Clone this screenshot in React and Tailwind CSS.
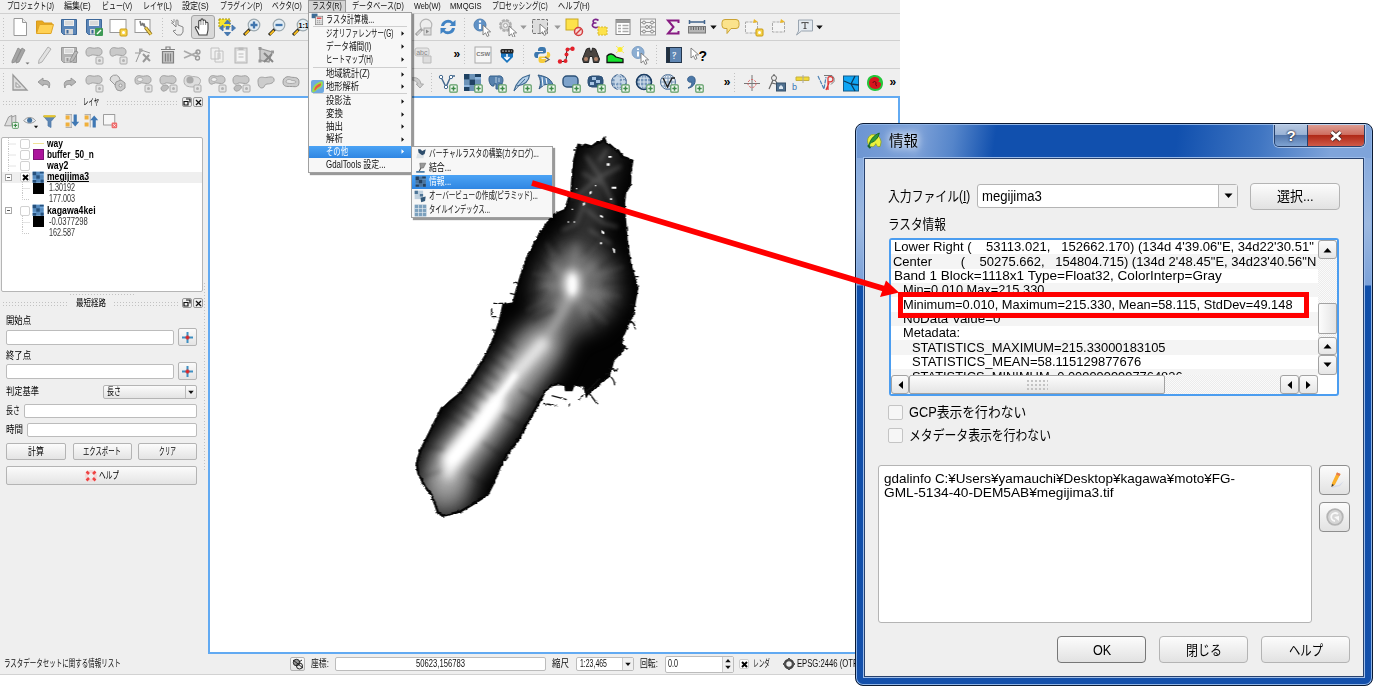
import React, { useLayoutEffect, useRef } from "react";

/* Condenses or widens one line of text to the width of its box. */
function Fit({ className = "", children }) {
  const outer = useRef(null);
  const inner = useRef(null);
  useLayoutEffect(() => {
    const n = inner.current.offsetWidth;
    const w = outer.current.getBoundingClientRect().width;
    if (n > 0) inner.current.style.transform = `scaleX(${w / n})`;
  });
  return (
    <span ref={outer} className={`flex shrink-0 items-center whitespace-pre ${className}`}>
      <span ref={inner} className="inline-block shrink-0 origin-left whitespace-pre">{children}</span>
    </span>
  );
}

const Ic = ({ s = 20, children }) => (
  <svg width={s} height={s} viewBox="0 0 20 20" fill="none" className="shrink-0">{children}</svg>
);
const Cell = ({ children, on }) => (
  <span className="flex h-6 w-[24.6px] shrink-0 items-center justify-center">
    {on ? <span className="flex h-6 w-6 items-center justify-center rounded-[3px] border border-[#a5a5a5] bg-[#d9d9d9]">{children}</span> : children}
  </span>
);
const Dots = ({ className }) => (
  <span className={`shrink-0 bg-[radial-gradient(#c2c2c2_0.7px,transparent_1px)] bg-[size:3px_3px] ${className}`} />
);
const Handle = ({ className }) => (
  <span className={`flex shrink-0 justify-center ${className}`}><Dots className="h-[21px] w-[4px]" /></span>
);
const Tri = ({ c = "#111", className = "w-[9px]" }) => (
  <span className={`flex shrink-0 items-center justify-center ${className}`}>
    <svg width="7" height="5" viewBox="0 0 7 5"><path d="M0.3 0.5h6.4L3.5 4.3z" fill={c} /></svg>
  </span>
);
const Plus = () => (
  <g><rect x="11.8" y="11.8" width="7.4" height="7.4" rx="1" fill="#f4faf4" stroke="#5a9a62" strokeWidth="1.2" /><path d="M15.5 13.300v4.400M13.300 15.500h4.400" stroke="#3c8a48" strokeWidth="1.5" /></g>
);
const Badge = ({ y }) => (
  <g><rect x="12" y="12" width="7" height="7" rx="1" fill={y ? "#f6d34a" : "#e4e4e4"} stroke={y ? "#c99a13" : "#ababab"} /><circle cx="15.5" cy="15.5" r="1.500" fill={y ? "#fff" : "#b2b2b2"} /></g>
);
const Blob = ({ badge = true, hole, low }) => (
  <Ic>
    <path d="M2 7C2 3 5 2 8 3S14 1.500 16.500 3.500S18.500 10.500 14.500 10.500S9 9 6.500 10.500S2 11 2 7Z" fill="#c9c9c9" stroke="#a0a0a0" />
    {hole && <ellipse cx="7" cy="6.500" rx="2.800" ry="2" fill="#efefef" stroke="#a0a0a0" strokeWidth=".7" />}
    {low && <path d="M3 16C3 12 8 11 10 13S7 19 4.500 18Z" fill="#bdbdbd" stroke="#a0a0a0" />}
    {badge && <Badge />}
  </Ic>
);
const Mag = ({ children, g }) => (
  <Ic>
    <path d="M8 12L2 18" stroke={g ? "#999" : "#222"} strokeWidth="3" /><path d="M7 13.500L3 17.500" stroke={g ? "#ccc" : "#f1b71c"} strokeWidth="2" />
    <circle cx="12" cy="8" r="5.800" fill={g ? "#eee" : "#e3edf4"} stroke={g ? "#b5b5b5" : "#9aa7ae"} strokeWidth="1.200" />{children}
  </Ic>
);
const Cursor = ({ x = 9, y = 7 }) => (
  <path transform={`translate(${x} ${y})`} d="M0 0V10L2.500 7.800L4.200 11.500L6 10.500L4.300 7L7.600 6.800Z" fill="#fff" stroke="#777" strokeWidth=".9" />
);
const Floppy = ({ c = "#5b86b8", d = "#3c6799", children }) => (
  <Ic>
    <path d="M2.500 2.500h15v15h-13l-2-2z" fill={c} stroke={d} /><rect x="5" y="3" width="10" height="6" fill="#eee" /><path d="M6 5h8M6 7h8" stroke="#bbb" strokeWidth=".8" /><rect x="6" y="12" width="8" height="5.500" fill="#d8d8d8" /><rect x="7.500" y="13" width="2" height="3.500" fill={d} />{children}
  </Ic>
);
const Checker = ({ s = 20, plus, d = "#1f4263", l = "#6da5db" }) => (
  <Ic s={s}>
    <rect x="1" y="1" width="17" height="17" fill={l} />
    <path d="M6.500 1H12v5.500H6.500zM1 6.500h5.500V12H1zM12 6.500h6V12h-6zM6.500 12H12v6H6.500z" fill={d} opacity=".3" />
    <path d="M1 1h5.500v5.500H1zM12 1h6v3h-6zM6.500 6.500H12V12H6.500zM1 14h5.500v4H1zM13 13h5v5h-5z" fill={d} />
    {plus && <Plus />}
  </Ic>
);
const Globe = ({ children, v }) => (
  <Ic>
    <circle cx="9" cy="9" r="7.500" fill={v ? "#e8eef4" : "#7797bb"} stroke="#4a6b92" /><path d="M1.500 9h15M9 1.500v15M3 5.200h12M3 13h12" stroke={v ? "#7d99b8" : "#dbe6f0"} strokeWidth="1" /><ellipse cx="9" cy="9" rx="3.800" ry="7.500" stroke={v ? "#7d99b8" : "#dbe6f0"} />{children}<Plus />
  </Ic>
);
const Page = ({ c = "#999", children }) => (
  <Ic><path d="M4 1.500h8.500l4 4V18.500H4z" fill="#fff" stroke={c} /><path d="M12.500 1.500v4h4" stroke={c} fill="#eee" />{children}</Ic>
);
const More = ({ className }) => (
  <span className={`flex shrink-0 items-center text-[12px] leading-none font-bold text-black ${className}`}>»</span>
);

function Toolbar1() {
  return (
    <div className="flex h-[27px] items-center border-b border-[#d0d0d0]">
      <Handle className="w-[7.7px]" />
      <Cell><Page /></Cell>
      <Cell><Ic><path d="M1.500 16V4h6l1.500 2h8v3" fill="#e8a91f" stroke="#d79a1c" /><path d="M1.500 16.500L4.500 7.500h14l-2.500 9z" fill="#ffd154" stroke="#e0a526" /></Ic></Cell>
      <Cell><Floppy /></Cell>
      <Cell><Floppy><rect x="11" y="11" width="8" height="8" rx="1" fill="#3f9a55" /><path d="M13 17l4-4" stroke="#fff" strokeWidth="1.500" /></Floppy></Cell>
      <Cell><Ic><rect x="2" y="2.500" width="16" height="13" fill="#fff" stroke="#999" /><Badge y /></Ic></Cell>
      <Cell><Ic><rect x="2" y="2.500" width="15" height="13" fill="#fff" stroke="#999" /><path d="M9 6l4 5" stroke="#777" strokeWidth="2" /><path d="M12.500 10.500l5.500 7" stroke="#8a6a10" strokeWidth="3.500" /><path d="M12.500 10.500l5.500 7" stroke="#f0d25a" strokeWidth="2" /><path d="M7 4l1 4 4-1" stroke="#777" strokeWidth="1.500" /></Ic></Cell>
      <Handle className="w-[10.7px] pl-[4px]" />
      <Cell><Ic><path d="M4 6l4 4V4c0-1.500 2-1.500 2 0v4l5 2v5l-2 3H9l-4-4 3-1" fill="#eee" stroke="#888" /><path d="M3 3l3 3M6 2v3M3 6h2" stroke="#999" /></Ic></Cell>
      <Cell on><Ic><path d="M6 18C5 15 2.500 12 2.200 10.200C3 9 4.500 9.500 5.700 11.500V4.500C5.700 3 7.700 3 7.900 4.500V3C8 1.500 10 1.500 10.200 3V4C10.500 2.700 12.400 2.700 12.600 4.300V6C13 4.800 15 5 15 6.500V12C15 15 14 16 14 18Z" fill="#fff" stroke="#444" strokeWidth="1.100" /><path d="M7.900 4.500V8M10.200 4v4M12.600 5.500V8" stroke="#777" strokeWidth=".8" /></Ic></Cell>
      <Cell><Ic><path d="M2 2h11v8H2z" fill="#f7e52e" stroke="#a38f10" strokeDasharray="2 1" /><path d="M10.500 3l3 3.500h-6zM10.500 19l3-3.500h-6zM2.500 11l3.500-3v6zM18.500 11L15 8v6z" fill="#4879b0" stroke="#4879b0" /><rect x="8.700" y="9" width="3.600" height="3.600" fill="#4879b0" /></Ic></Cell>
      <Cell><Mag><path d="M12 4.500v7M8.500 8h7" stroke="#4076ae" strokeWidth="2.300" /></Mag></Cell>
      <Cell><Mag><path d="M8.500 8h7" stroke="#4076ae" strokeWidth="2.300" /></Mag></Cell>
      <Cell><Mag><text x="7.600" y="10.800" className="fill-black text-[7px] font-bold">1:1</text></Mag></Cell>
      <span className="w-[98px] shrink-0" />
      <Cell><Mag g><rect x="10" y="11" width="7" height="7" fill="#ddd" stroke="#aaa" /><path d="M12 12.500l3 2-3 2z" fill="#888" /></Mag></Cell>
      <Cell><Ic><path d="M3 9a7 7 0 0 1 12-4l2.500-2v6h-6l2-2a4.500 4.500 0 0 0-7.500 2z" fill="#4183c4" /><path d="M17 11a7 7 0 0 1-12 4l-2.500 2v-6h6l-2 2a4.500 4.500 0 0 0 7.500-2z" fill="#4183c4" /></Ic></Cell>
      <Handle className="w-[9.4px]" />
      <Cell><Ic><circle cx="8" cy="8" r="6" fill="#5f91c6" stroke="#4f7fb0" /><path d="M8 7v5M8 3.500v2" stroke="#fff" strokeWidth="2.200" /><Cursor x={11} y={8} /></Ic></Cell>
      <Cell><Ic><circle cx="8.500" cy="8.500" r="5.500" fill="#ddd" stroke="#b0b0b0" strokeWidth="2" strokeDasharray="3 1.300" /><circle cx="8.500" cy="8.500" r="4.500" fill="#ddd" stroke="#aaa" /><circle cx="8.500" cy="8.500" r="2" fill="#f2f2f2" stroke="#aaa" /><Cursor x={12} y={9} /></Ic></Cell>
      <Tri c="#999" />
      <Cell><Ic><rect x="1.500" y="2.500" width="15" height="14" fill="#ddd" stroke="#777" strokeDasharray="3 1.500" /><Cursor x={9} y={7} /></Ic></Cell>
      <Tri c="#999" />
      <Cell><Ic><rect x="2" y="2" width="12" height="11" fill="#fde24a" stroke="#c9a722" /><circle cx="14.500" cy="14.500" r="4" fill="#f6dada" stroke="#d33e3e" strokeWidth="1.500" /><path d="M12 17l5-5" stroke="#d33e3e" strokeWidth="1.400" /></Ic></Cell>
      <Cell><Ic><path d="M9.500 3.500C6 1 2.500 3.500 5 6H7.500H5C1.500 8 4 12 9.500 10" stroke="#7b2389" strokeWidth="1.700" /><rect x="9" y="10" width="9" height="8" fill="#fde24a" stroke="#d7b92d" strokeDasharray="2 1" /></Ic></Cell>
      <Cell><Ic><rect x="3" y="2.500" width="14" height="15" fill="#fff" stroke="#888" /><path d="M3 4.500h14" stroke="#999" strokeWidth="3" /><path d="M5 8.500h3M5 11.500h3M5 14.500h3M9.500 8.500h6M9.500 11.500h6M9.500 14.500h6" stroke="#aaa" strokeWidth="1.500" /></Ic></Cell>
      <Cell><Ic><rect x="2.500" y="2" width="15" height="16" fill="#f3f3f3" stroke="#999" /><path d="M3 5.500h14M3 10h14M3 14.500h14" stroke="#999" /><g fill="#eee" stroke="#888"><circle cx="6" cy="5.500" r="1.500" /><circle cx="14" cy="5.500" r="1.500" /><circle cx="9" cy="10" r="1.500" /><circle cx="12.500" cy="10" r="1.500" /><circle cx="6" cy="14.500" r="1.500" /><circle cx="14" cy="14.500" r="1.500" /></g></Ic></Cell>
      <Cell><Ic><path d="M15.500 6V3.500H5L10.500 10L5 16.500H15.500V14" stroke="#871b82" strokeWidth="2" /></Ic></Cell>
      <Cell><Ic><path d="M2 5h16M2.500 3v4M17.500 3v4" stroke="#41648c" strokeWidth="1.500" /><rect x="1.500" y="9.500" width="17" height="6.500" fill="#b5b5b5" stroke="#777" /><path d="M4 10v3M6.500 10v3M9 10v3M11.500 10v3M14 10v3M16.500 10v3" stroke="#666" /></Ic></Cell>
      <Tri className="w-[8px]" />
      <Cell><Ic><path d="M5 2.500h11q3 0 3 3v3q0 3-3 3h-5l-4 5v-5H5q-3 0-3-3v-3q0-3 3-3z" fill="#fbe38c" stroke="#caa334" /></Ic></Cell>
      <Cell><Ic><path d="M1.500 5h12v11h-12z" stroke="#aaa" strokeDasharray="3 1" fill="#f4f4f4" /><path d="M9 6l1-4 4 3z" fill="#eab729" /><Badge y /></Ic></Cell>
      <Cell><Ic><path d="M3.500 5h12v10h-12z" stroke="#aaa" strokeDasharray="3 1" fill="#f4f4f4" /><path d="M11 6l1-4 4 3z" fill="#eab729" /></Ic></Cell>
      <Cell><Ic><path d="M4.500 3h14v11h-11l-5 4 2-4z" fill="#e3e9ef" stroke="#9aa5b0" /><path d="M8 6.500V5.500h6v1M11 5.500v6M9.500 11.500h3" stroke="#555" strokeWidth="1.200" /></Ic></Cell>
      <Tri className="w-[8px]" />
    </div>
  );
}

function Toolbar2() {
  return (
    <div className="flex h-[28px] items-center border-b border-[#d0d0d0]">
      <Handle className="w-[7.7px]" />
      <Cell><Ic><path d="M2 16L8 3l3 2-6 12-3 1zM6 16L12 3l3 2-6 12-3 1z" fill="#a5a5a5" stroke="#888" strokeWidth=".8" /><path d="M15.500 17.500h4l-2 2z" fill="#777" /></Ic></Cell>
      <Cell><Ic><path d="M4 15L13 2l3 2L7 17l-3.500 1.500z" fill="#e2e2e2" stroke="#b0b0b0" /></Ic></Cell>
      <Cell><Floppy c="#b4b4b4" d="#989898"><path d="M11 15l5-9 3 1-5 9-3 1z" fill="#bbb" stroke="#888" strokeWidth=".8" /></Floppy></Cell>
      <Cell><Blob /></Cell>
      <Cell><Blob /></Cell>
      <Cell><Ic><path d="M3 17L8 5L17 8M2 8h6" stroke="#999" /><rect x="6" y="3.500" width="3.500" height="3.500" fill="#aaa" /><path d="M10 9l7 7M16 10l-6 7" stroke="#999" strokeWidth="2" /></Ic></Cell>
      <Cell><Ic><path d="M4.500 6.500h11V18h-11z" fill="#c4c4c4" stroke="#808080" strokeWidth="1.200" /><path d="M3 4.500h14M8 4V2h4v2M7.500 8.500v8M10 8.500v8M12.500 8.500v8" stroke="#808080" strokeWidth="1.200" /></Ic></Cell>
      <Cell><Ic><path d="M2 6L15 12M2 13L16 7" stroke="#aaa" strokeWidth="1.800" /><circle cx="15.500" cy="13" r="2" stroke="#999" strokeWidth="1.300" /><circle cx="16" cy="7" r="2" stroke="#999" strokeWidth="1.300" /></Ic></Cell>
      <Cell><Ic><path d="M4 3h8v11H4zM8 6h8v11H8z" fill="#f1f1f1" stroke="#c0c0c0" /><path d="M10 9h4M10 11h4M10 13h4" stroke="#c5c5c5" /></Ic></Cell>
      <Cell><Ic><rect x="4" y="3" width="12" height="15" fill="#ddd" stroke="#b5b5b5" /><rect x="6" y="6" width="8" height="10" fill="#f5f5f5" /><path d="M7.500 2.500h5v2.500h-5z" fill="#bbb" /><path d="M7.500 9h5M7.500 12h5" stroke="#bbb" /></Ic></Cell>
      <Cell><Ic><path d="M4 3.500L16 7L13 17L4 15.500Z" fill="#ccc" stroke="#999" strokeWidth="1.300" /><path d="M2.500 2h3v3h-3zM15 5.500h3v3h-3zM2.500 14.500h3v3h-3z" fill="#999" /><path d="M8 8l9 9M16 9l-8 8" stroke="#888" strokeWidth="2" /></Ic></Cell>
      <span className="w-[133.400px] shrink-0" />
      <Cell><Ic><rect x="1" y="3" width="14" height="8" rx="2" fill="#e4e4e4" stroke="#c0c0c0" /><text x="2.200" y="9.500" className="fill-[#888] text-[7px]">abc</text><path d="M9 11h8v7H9z" fill="#ddd" stroke="#bbb" /></Ic></Cell>
      <More className="w-[24px] justify-end pb-px" />
      <Handle className="w-[10px]" />
      <Cell><Ic><rect x="2" y="2" width="16" height="16" fill="#f6f6f6" stroke="#aaa" /><text x="3.200" y="11" className="fill-[#777] text-[6px] font-bold">CSW</text></Ic></Cell>
      <Cell><Ic><path d="M4 7h12v5l-6 6-6-6z" fill="#1874be" /><rect x="3.500" y="4" width="13" height="4.500" rx="1.500" fill="#222" /><path d="M5 6.200h10" stroke="#999" strokeWidth="1.200" strokeDasharray="2 1" /><path d="M10 9v5M7.500 12L10 14.500L12.500 12" stroke="#fff" strokeWidth="1.500" /></Ic></Cell>
      <Handle className="w-[10px]" />
      <Cell><Ic><path d="M10 2C6 2 6 4 6 6h5v1H4C1.500 7 1.500 13 4.500 13H6v-2c0-2 1-2.500 4-2.500s4 0 4-2.500C14 2.500 13 2 10 2z" fill="#3b77ae" /><path d="M10 18c4 0 4-2 4-4H9.500v-1H16c3 0 3-6 0-6h-1v2c0 2-1 2.500-4 2.500S6.500 11 6.500 14 7 18 10 18z" fill="#f6cc3b" /><path d="M13 12l4 2.500-4 2.500" stroke="#666" strokeWidth="1.300" /></Ic></Cell>
      <Cell><Ic><path d="M4 16.500H9.500L10.500 12V7L12 4H16" stroke="#222" /><g fill="#e5202a"><circle cx="4" cy="16.500" r="2.200" /><circle cx="9.500" cy="16" r="2" /><circle cx="10.500" cy="9.500" r="2" /><circle cx="11.500" cy="4.500" r="2" /><circle cx="16.500" cy="3.800" r="2.200" /></g></Ic></Cell>
      <Cell><Ic><path d="M5.500 4l3-1 1 4h1l1-4 3 1 4 10-1 3.500h-5l-1-6h-3l-1 6h-5L1.500 14z" fill="#4a4440" stroke="#222" /><circle cx="5" cy="14" r="2" fill="#b2846a" /><circle cx="15" cy="14" r="2" fill="#b2846a" /></Ic></Cell>
      <Cell><Ic><path d="M2 17.500V11Q6 6.500 11 12L18 14V17.500Z" fill="#15e22d" stroke="#111" strokeWidth="1.300" /><circle cx="15" cy="4.500" r="2.500" fill="#fff21e" /><path d="M11 1l8 7M19 1l-8 7" stroke="#f5e63c" strokeWidth=".8" /></Ic></Cell>
      <Cell><Ic><circle cx="8" cy="7.500" r="6" fill="#8caed2" stroke="#7d9fc5" /><path d="M8 6.500v5M8 3.500v1.500" stroke="#fff" strokeWidth="2" /><Cursor x={11} y={8} /></Ic></Cell>
      <Handle className="w-[9.500px]" />
      <Cell><Ic><rect x="2.500" y="2.500" width="15" height="15" fill="#5f86b3" stroke="#24364c" /><path d="M4.500 2.500v15" stroke="#22303f" strokeWidth="3" /><text x="8.300" y="13.800" className="fill-white font-serif text-[11px]">?</text></Ic></Cell>
      <Cell><Ic><Cursor x={2} y={3} /><text x="9.500" y="15.500" className="fill-black text-[14px] font-bold">?</text></Ic></Cell>
    </div>
  );
}

function Toolbar3() {
  return (
    <div className="flex h-[27px] items-center">
      <Handle className="w-[7.700px]" />
      <Cell><Ic><path d="M3 2L17 17H3Z" fill="#ddd" stroke="#999" strokeWidth="1.300" /><path d="M6 9.500l4.500 4.500H6z" fill="#efefef" stroke="#999" /></Ic></Cell>
      <Cell><Ic><path d="M3 9l5-4v2.500c6-.5 8 2 6 7.500 0-3-2-4-6-3.500V13z" fill="#b5b5b5" stroke="#999" /></Ic></Cell>
      <Cell><Ic><path d="M17 9l-5-4v2.500c-6-.5-8 2-6 7.500 0-3 2-4 6-3.500V13z" fill="#b5b5b5" stroke="#999" /></Ic></Cell>
      <Cell><Blob /></Cell>
      <Cell><Ic><path d="M2 7a5 5 0 0 1 9-3l2 5-5 4z" fill="#ddd" stroke="#999" /><path d="M8 9l5-2 4 3v5l-4 3-4-1-2-4z" fill="#c9c9c9" stroke="#999" /><circle cx="12.500" cy="12.500" r="1.500" fill="#eee" stroke="#999" /></Ic></Cell>
      <Cell><Blob hole /></Cell><Cell><Blob low /></Cell>
      <Cell><Ic><path d="M2 8c0-5 3-6 6-5s8 0 10 3-2 8-7 8S2 13 2 8z" fill="#ddd" stroke="#b0b0b0" /><circle cx="8" cy="7" r="3.600" fill="#aaa" /><Badge /></Ic></Cell>
      <Cell><Blob hole /></Cell><Cell><Blob low /></Cell>
      <Cell><Ic><path d="M2 8C2 3.500 6 4 8.500 4.500S17 2 18 6s-4 5-7 5-2 4-5 4S2 12 2 8Z" fill="#ccc" stroke="#a0a0a0" /></Ic></Cell>
      <Cell><Ic><path d="M2 9C2 4 7 3 9.500 4S18 3 18 9s-4 4.500-8 4.500S2 14 2 9Z" fill="#ccc" stroke="#999" /><path d="M5 9c0-3 4-3 5-2s5 0 5 2-10 2-10 0z" fill="#e6e6e6" stroke="#aaa" /></Ic></Cell>
      <span className="w-[101px] shrink-0" />
      <Cell><Ic><path d="M3 6c6-3 11-1 12 5h2.500L14 15l-4-4h2c-1-3-5-4-9-5z" fill="#ccc" stroke="#aaa" /></Ic></Cell>
      <Handle className="w-[7.400px]" />
      <Cell><Ic><path d="M3 4L8 14L13 3L17 3" stroke="#44698f" strokeWidth="1.500" /><g fill="#fff" stroke="#44698f"><circle cx="3" cy="4" r="1.700" /><circle cx="8" cy="14" r="1.700" /><circle cx="13" cy="4" r="1.700" /></g><Plus /></Ic></Cell>
      <Cell><Checker plus l="#8fb6dd" /></Cell>
      <Cell><Ic><path d="M3 3h8c5-1 6 4 4 8h-3v5H9v-5H7v2H5C2 11 1 5 3 3z" fill="#5781ad" stroke="#35608c" /><path d="M9 4v6M12 5v4" stroke="#b9cfe4" /><Plus /></Ic></Cell>
      <Cell><Ic><path d="M2 18C4 10 9 4 17.500 2C17 8 12 12 5 13" fill="#b4d0ea" stroke="#3e6890" strokeWidth="1.200" /><path d="M2 18L13 6" stroke="#3e6890" /><Plus /></Ic></Cell>
      <Cell><Ic><path d="M2 2C8 3 15 5 17 12L12 11L8 12L3 16C5 11 5 7 2 2Z" fill="#5d8bbb" stroke="#31587f" /><path d="M6 4l1 9M10 5l1 6" stroke="#fff" /><Plus /></Ic></Cell>
      <Cell><Ic><rect x="2" y="3" width="15" height="11" rx="4" fill="#7ea3cb" stroke="#2d5177" strokeWidth="1.400" /><Plus /></Ic></Cell>
      <Cell><Ic><rect x="2" y="3" width="15" height="11" rx="4" fill="#32577f" stroke="#2d5177" /><path d="M6 4h4v3H6zM10 7h4v3h-4zM4 9h4v3H4z" fill="#a9c6e4" /><Plus /></Ic></Cell>
      <Cell><Globe><path d="M4 5l4-2 2 4-4 4zM11 8l4-1v4l-3 2z" fill="#c6d7e8" /></Globe></Cell>
      <Cell><Globe><circle cx="9" cy="9" r="7.500" stroke="#1d3e63" strokeWidth="1.600" /></Globe></Cell>
      <Cell><Globe v><path d="M4 5l4.500 9L13 5h3" stroke="#222" strokeWidth="1.400" /></Globe></Cell>
      <Cell><Ic><path d="M4 15c4-2 4-4 3.500-6C4 10 3 7 4 5s6-3 7 1c1 5-3 9-7 9z" fill="#4c78a8" stroke="#335d8a" /><Plus /></Ic></Cell>
      <More className="w-[24px] justify-end pb-px" />
      <Handle className="w-[9.500px]" />
      <Cell><Ic><path d="M10 2v16M2 10.500h16" stroke="#777" /><circle cx="10" cy="10.500" r="4" stroke="#d55" strokeDasharray="2 1.500" /></Ic></Cell>
      <Cell><Ic><circle cx="7" cy="5" r="2.500" stroke="#666" /><path d="M6 7L2 16M8 7l2 3M5 10l4 1M7 1v2" stroke="#666" strokeWidth="1.200" /><rect x="9.500" y="10" width="9" height="8" fill="#51718f" stroke="#35506a" /><path d="M12 14l2-2 2 2v2h-4z" fill="#dde8f1" /></Ic></Cell>
      <Cell><Ic><path d="M5 4h13v3.500H5z" fill="#f1d936" stroke="#c5b040" /><path d="M12 2v8" stroke="#aaa" /><text x="1" y="17" className="fill-[#3a75b5] text-[9px]">b</text></Ic></Cell>
      <Cell><Ic><path d="M2 3l6 13L10 4" stroke="#4c82b5" strokeWidth="1.200" strokeDasharray="4 1" /><path d="M12 17V5c0-2 5-2 5 1s-2 3-5 3M13 10l-3 7" stroke="#d33" strokeWidth="1.300" /><path d="M8 2.500h8q3 2 2 6l-3 3" stroke="#777" /></Ic></Cell>
      <Cell><Ic><rect x="2.500" y="3" width="15" height="15" fill="#10a6f5" stroke="#135b89" /><path d="M3 8l7 3 4-8M10 11l4 7M10 11l8 1" stroke="#0f3c5c" strokeWidth="1.300" /></Ic></Cell>
      <Cell><Ic><path d="M2 10C2 4 6 2 10 2s8 3 8 8-3 8-8 8-8-4-8-8z" fill="#24c63b" /><path d="M4 10c0-4 3-6 6-6s6 3 3 5c3 0 4 2 2 5s-11 3-11-4z" fill="#d9141e" /><path d="M8 10c0-2 3-2 3 0s-1 2 1 3" stroke="#5a0d0f" strokeWidth="1" /></Ic></Cell>
      <More className="w-[9px] pb-px pl-[2px]" />
    </div>
  );
}

const MENUS = [
  ["プロジェクト(J)", "ml-[7px] w-[47px]"], ["編集(E)", "ml-[10px] w-[27px]"], ["ビュー(V)", "ml-[11px] w-[30px]"],
  ["レイヤ(L)", "ml-[11px] w-[29px]"], ["設定(S)", "ml-[10px] w-[27px]"], ["プラグイン(P)", "ml-[11px] w-[42px]"],
  ["ベクタ(O)", "ml-[10px] w-[30px]"], ["ラスタ(R)", "w-[30px]"], ["データベース(D)", "ml-[6px] w-[52px]"],
  ["Web(W)", "ml-[10px] w-[27px]"], ["MMQGIS", "ml-[9px] w-[32px]"], ["プロセッシング(C)", "ml-[10px] w-[56px]"], ["ヘルプ(H)", "ml-[10px] w-[32px]"],
];

function Tree({ rows }) {
  return (
    <div className="mt-[7px] ml-px flex h-[155px] w-[202px] flex-col rounded-[2px] border border-[#b5b5b5] bg-white">
      {rows.map((r, i) => (
        <div key={i} className={`flex h-[11.180px] shrink-0 items-center ${r.sel ? "bg-[#efefef]" : ""}`}>
          <span className="flex w-[14px] shrink-0 justify-center">
            {r.exp ? <svg width="7" height="7" className="-ml-[1px]"><rect x=".5" y=".5" width="6" height="6" fill="#fff" stroke="#aaa" /><path d="M2 3.500h3" stroke="#555" /></svg>
              : r.leaf ? null : <svg width="9" height="12" className="ml-[4px]"><path d="M1.500 0v12M1.500 6h7" stroke="#c8c8c8" strokeDasharray="1 1" /></svg>}
          </span>
          {r.leaf ? (
            <span className="flex w-[14px] justify-end"><svg width="8" height="12"><path d={r.last ? "M.5 0v6.500h7" : "M.5 0v12M.5 6.500h7"} stroke="#c8c8c8" fill="none" strokeDasharray="1 1" /></svg></span>
          ) : (
            <span className="flex w-[14px] shrink-0 justify-end">
              <span className="flex h-[10px] w-[10px] items-center justify-center rounded-[2px] border border-[#d2d2d2] bg-white">
                {r.on && <svg width="7" height="7"><path d="M1 1l5 5M6 1L1 6" stroke="#000" strokeWidth="2" /></svg>}
              </span>
            </span>
          )}
          <span className="ml-[2px] flex w-[12px] shrink-0 items-center justify-center">{r.icon}</span>
          <Fit className={`text-[10px] leading-none ${r.leaf ? "ml-[5px] text-[#333]" : "ml-[3px] font-bold text-black"} ${r.sel ? "underline" : ""} ${r.w}`}>{r.t}</Fit>
        </div>
      ))}
    </div>
  );
}
const Black = () => <span className="h-[11px] w-[11px] bg-black" />;
const LAYERS = [
  { t: "way", w: "w-[16px]", icon: <span className="h-px w-[11px] bg-[#f0e296]" /> },
  { t: "buffer_50_n", w: "w-[47px]", icon: <span className="h-[11px] w-[11px] border border-[#7c1273] bg-[#ac149c]" /> },
  { t: "way2", w: "w-[21px]" },
  { t: "megijima3", w: "w-[42px]", sel: true, exp: true, on: true, icon: <Checker s={13} d="#26507c" /> },
  { t: "1.30192", w: "w-[26px]", leaf: true, icon: <Black /> },
  { t: "177.003", w: "w-[26px]", leaf: true, last: true },
  { t: "kagawa4kei", w: "w-[49px]", exp: true, icon: <Checker s={13} d="#26507c" /> },
  { t: "-0.0377298", w: "w-[39px]", leaf: true, icon: <Black /> },
  { t: "162.587", w: "w-[26px]", leaf: true, last: true },
];

const DockTitle = ({ t, w }) => (
  <div className="flex h-[12px] items-center pl-[2px]">
    <Dots className="h-[5px] flex-1" />
    <Fit className={`mx-[7px] text-[9.500px] leading-none ${w}`}>{t}</Fit>
    <Dots className="mr-[3px] h-[5px] flex-1" />
    <span className="mr-px flex h-[10px] w-[10px] shrink-0 items-center justify-center rounded-[2px] border border-[#999] bg-[#eee]"><svg width="8" height="8"><path d="M3 1h4v3.500M1 3.500h4v3.500H1z" stroke="#111" fill="none" strokeWidth="1.200" /></svg></span>
    <span className="flex h-[10px] w-[10px] shrink-0 items-center justify-center rounded-[2px] border border-[#999] bg-[#eee]"><svg width="7" height="7"><path d="M1 1l5 5M6 1L1 6" stroke="#111" strokeWidth="1.300" /></svg></span>
  </div>
);
const Field = ({ className }) => <span className={`rounded-[2px] border border-[#bcbcbc] bg-white ${className}`} />;
const btn = "flex items-center justify-center rounded-[2px] border border-[#b4b4b4] bg-linear-to-b from-[#fbfbfb] to-[#e4e4e4]";
const CrossBtn = () => (
  <span className={`h-[18px] w-[19px] ${btn}`}><svg width="11" height="11"><path d="M5.500 0v11M0 5.500h11" stroke="#3e8fc2" strokeWidth="2" /><path d="M5.500 3.500v4M3.500 5.500h4" stroke="#e02828" strokeWidth="2" /></svg></span>
);

function LeftPanel() {
  return (
    <div className="flex w-[208px] shrink-0 text-black">
      <div className="flex w-[203px] shrink-0 flex-col">
        <DockTitle t="レイヤ" w="w-[16px]" />
        <div className="mt-[4px] flex h-[18px] items-center gap-[3px] pl-[3px]">
          <Ic s={16}><path d="M2 16l5-11 4-2v12M11 5l5-2v13H2" fill="#ddd" stroke="#888" /><Plus /></Ic>
          <Ic s={17}><path d="M2 9c4-5 10-5 14 0-4 4-10 4-14 0z" fill="#e9eff5" stroke="#888" /><circle cx="9" cy="8.500" r="3" fill="#44729e" /><path d="M14 15h5l-2.500 3z" fill="#111" /></Ic>
          <Ic s={15}><path d="M2 3h16l-6 7v8l-4-2v-6z" fill="#5d86b4" stroke="#4f79a8" /><path d="M2 3h16" stroke="#e5c530" strokeWidth="3" /></Ic>
          <span className="w-px" />
          <Ic s={16}><path d="M2 3h5v5H2zM2 12h5v5H2z" fill="#f0b03c" /><path d="M9 2v16M2 2h8M2 18h8" stroke="#999" /><path d="M12 2h4v9h3l-5 6-5-6h3z" fill="#3f78b4" /></Ic>
          <Ic s={16}><path d="M2 3h5v5H2zM2 12h5v5H2z" fill="#f0b03c" /><path d="M9 2v16M2 2h8" stroke="#999" /><path d="M12 18h4V9h3l-5-6-5 6h3z" fill="#3f78b4" /></Ic>
          <Ic s={16}><rect x="2" y="2" width="14" height="13" fill="#f7f7f7" stroke="#888" /><rect x="12" y="12" width="7" height="7" rx="1.500" fill="#ee6a6a" /><path d="M14 14l3 3M17 14l-3 3" stroke="#fff" /></Ic>
        </div>
        <Tree rows={LAYERS} />
        <div className="flex h-[5px] items-center justify-center"><Dots className="h-[4px] w-[66px]" /></div>
        <DockTitle t="最短経路" w="w-[30px]" />
        <div className="flex w-[197px] flex-col pl-[6px] text-[10px] leading-none">
          <Fit className="mt-[6px] h-[11px] w-[25px]">開始点</Fit>
          <div className="mt-[2px] flex items-center justify-between"><Field className="h-[15px] w-[168px]" /><CrossBtn /></div>
          <Fit className="mt-[4px] h-[11px] w-[25px]">終了点</Fit>
          <div className="mt-px flex items-center justify-between"><Field className="h-[15px] w-[168px]" /><CrossBtn /></div>
          <div className="mt-[5px] flex items-center justify-between">
            <Fit className="w-[33px]">判定基準</Fit>
            <span className={`h-[14px] w-[94px] !justify-between pl-[3px] ${btn}`}><Fit className="w-[14px]">長さ</Fit><span className="flex h-full w-[11px] items-center justify-center border-l border-[#bbb]"><Tri className="w-[6px]" /></span></span>
          </div>
          <div className="mt-[5px] flex items-center justify-between"><Fit className="w-[14px]">長さ</Fit><Field className="h-[14px] w-[173px]" /></div>
          <div className="mt-[5px] flex items-center justify-between"><Fit className="w-[17px]">時間</Fit><Field className="h-[14px] w-[170px]" /></div>
          <div className="mt-[6px] flex justify-between">
            <span className={`h-[17px] w-[60px] ${btn}`}><Fit className="w-[16px]">計算</Fit></span>
            <span className={`h-[17px] w-[59px] ${btn}`}><Fit className="w-[38px]">エクスポート</Fit></span>
            <span className={`h-[17px] w-[59px] ${btn}`}><Fit className="w-[17px]">クリア</Fit></span>
          </div>
          <span className={`mt-[6px] h-[19px] gap-[2px] ${btn}`}>
            <svg width="12" height="12" viewBox="0 0 12 12"><circle cx="6" cy="6" r="4.500" fill="none" stroke="#f4d6d6" strokeWidth="3" /><path d="M1.500 1.500l2.500 2.500M10.500 1.500L8 4M1.500 10.500l2.500-2.500M10.500 10.500L8 8" stroke="#e44" strokeWidth="2.500" /></svg>
            <Fit className="w-[20px]">ヘルプ</Fit>
          </span>
        </div>
      </div>
      <Dots className="mt-[186px] h-[190px] w-[3px]" />
    </div>
  );
}

const OUT = "M535 45L548 48L556 44L575 50L588 40L600 38L612 25L618 38L630 45L642 56L655 62L665 80L680 84L697 92L692 120L690 165L675 190L672 220L675 270L680 330L690 400L702 440L712 475L705 510L697 560L685 580L668 620L664 640L674 650L660 670L640 690L632 720L625 740L600 760L575 780L560 795L552 766L520 766L515 780L498 780L496 765L480 762L455 765L435 785L410 830L375 890L355 930L320 975L300 1010L280 1060L262 1095L215 1125L180 1145L130 1157L115 1150L95 1095L75 1070L55 1030L50 1000L62 960L75 935L100 885L125 835L175 795L215 745L255 680L280 630L300 570L310 525L340 520L350 480L365 430L385 375L420 310L460 255L495 240L515 180L520 100Z";

function Island() {
  return (
    <svg width="260" height="400" viewBox="0 0 780 1200" className="block">
      <defs>
        <clipPath id="coast"><path d={OUT} /></clipPath>
        <filter id="rough" x="0" y="0" width="780" height="1200" filterUnits="userSpaceOnUse" colorInterpolationFilters="sRGB"><feTurbulence type="fractalNoise" baseFrequency="0.09" numOctaves="2" seed="4" result="n" /><feDisplacementMap in="SourceGraphic" in2="n" scale="9" xChannelSelector="R" yChannelSelector="G" /></filter>
        <filter id="b8" x="0" y="0" width="780" height="1200" filterUnits="userSpaceOnUse" colorInterpolationFilters="sRGB"><feGaussianBlur stdDeviation="7" /></filter>
        <filter id="b12" x="0" y="0" width="780" height="1200" filterUnits="userSpaceOnUse" colorInterpolationFilters="sRGB"><feGaussianBlur stdDeviation="13" /></filter>
        <filter id="b20" x="0" y="0" width="780" height="1200" filterUnits="userSpaceOnUse" colorInterpolationFilters="sRGB"><feGaussianBlur stdDeviation="22" /></filter>
        <filter id="b35" x="-60" y="-60" width="900" height="1320" filterUnits="userSpaceOnUse" colorInterpolationFilters="sRGB"><feGaussianBlur stdDeviation="30" /></filter>
      </defs>
      <g clipPath="url(#coast)" fill="none" strokeLinecap="round" strokeLinejoin="round">
        <rect width="780" height="1200" fill="#030303" />
        <g filter="url(#b35)">
          <path d="M430 390L490 320L590 330L650 410L655 520L590 590L500 620L420 590L400 480Z" fill="#5a5a5a" />
          <path d="M400 680L500 560" stroke="#5a5a5a" strokeWidth="110" />
          <path d="M135 1080L150 1010L235 900L325 775L415 650" stroke="#808080" strokeWidth="155" />
          <path d="M610 80L580 190L555 320" stroke="#343434" strokeWidth="90" />
        </g>
        <g filter="url(#b20)">
          <path d="M470 400L520 370L580 410L600 470L560 530L500 540L450 490Z" fill="#747474" />
          <path d="M425 640L470 575L515 500" stroke="#757575" strokeWidth="42" />
          <path d="M140 1050L155 995L240 890L305 795L350 730L425 645" stroke="#b0b0b0" strokeWidth="78" />
        </g>
        <g filter="url(#b12)">
          <path d="M517 465l-55-55M517 465l60-60M517 475l100 35M517 480l45 70M517 465L528 345M517 465l-85 5M517 470l-50 60" stroke="#a0a0a0" strokeWidth="17" opacity=".55" />
          <path d="M520 490L480 560L430 635L390 670" stroke="#adadad" strokeWidth="22" />
          <path d="M146 1030L165 975L240 885L300 795L350 728L428 640" stroke="#e8e8e8" strokeWidth="34" />
          <path d="M155 990L240 885L285 820" stroke="#fff" strokeWidth="58" />
          <ellipse cx="516" cy="462" rx="26" ry="44" fill="#eee" />
        </g>
        <g filter="url(#b8)">
          <path d="M560 80l40 60 60-30M600 140l-60 50-30 10M600 140l40 80M560 200l-30 80-40 20M560 240l50 40 40 10M550 130l50 30M570 300l60 40M600 90l20-30" stroke="#8a8a8a" strokeWidth="9" opacity=".42" />
          <path d="M560 370l50-60M600 410l60-40M610 460l80-5M610 510l60 40M570 550l25 50M450 420l-40-40M440 480l-60 20M460 540l-60 30M480 370l-30-50" stroke="#000" strokeWidth="9" opacity=".25" />
          <path d="M540 400l60-70M580 440l90-30M580 480l80 20M560 520l60 60M450 440l-50-10M440 510l-60 30M460 380l-20-40" stroke="#bbb" strokeWidth="6" opacity=".2" />
          <path d="M130 850l60 35M180 800l55 42M225 740l55 42M265 680l50 38M305 620l40 32M80 950l50 8M70 1040l50-16M420 820l-60-38M370 890l-60-34M310 980l-60-42M270 1070l-60-34M155 825l60 40M205 770l55 40M245 712l50 36M285 650l50 36" stroke="#000" strokeWidth="7" opacity=".27" />
          <path d="M160 985L240 886L300 797L345 735" stroke="#fff" strokeWidth="16" />
          <ellipse cx="517" cy="464" rx="10" ry="28" fill="#fff" />
        </g>
      </g>
      <g filter="url(#rough)">
        <path d={OUT} fill="none" stroke="#060606" strokeWidth="7" />
        <path d="M700 440h16M340 458l14 4M330 490l16 4M272 598l18 4M690 520l18 10M685 570q18 5 22 28M665 650l20 8 M630 715q15 12 23 2M620 730q25 18 24 36M600 745l-65 65M560 780l32 42M455 797l45 12M430 820l40 8M508 820v10M275 560h25M280 520h30M275 535v20M325 980l-8 10M310 1000h-14M520 60h8" stroke="#111" strokeWidth="4" fill="none" />
      </g>
      <path d="M625 78h10v5h-10zM620 100h9v7h-9zM635 170h14v6h-14zM568 186l7-4v8l-6 4zM630 205h6v5h-6zM548 220l7-3v7l-6 4zM600 254l9 4v6l-9-4zM604 300l9 6v7l-8-3zM600 337h6v6h-6zM637 353l8 5v12l-4-2zM503 274h4v4h-4zM521 274h4v4h-4zM528 174h4v4h-4zM515 236h4v4h-4zM585 165h4v4h-4z" fill="#fff" />
    </svg>
  );
}

const MI = ({ t, w, h = "h-[12.700px]", arrow = true, on, icon }) => (
  <div className={`flex shrink-0 items-center ${h} ${on ? "bg-linear-to-b from-[#4ba3f5] to-[#2f86e2] text-white" : "text-[#111]"}`}>
    <span className="flex w-[17px] shrink-0 justify-center">{icon}</span>
    <Fit className={`text-[10px] leading-none ${w}`}>{t}</Fit>
    {arrow && <span className="flex flex-1 justify-end pr-[6px]"><svg width="4" height="5"><path d="M.5 .3l2.600 2.200-2.600 2.200z" fill={on ? "#fff" : "#111"} /></svg></span>}
  </div>
);
const Sep = () => <div className="mx-[4px] h-px shrink-0 bg-[#cfcfcf]" />;

function RasterMenu() {
  return (
    <div className="absolute top-[12px] left-[308px] flex h-[161px] w-[104px] flex-col border border-[#a0a0a0] bg-[#f7f7f7] shadow-[2px_2px_1px_rgba(0,0,0,0.4)]">
      <MI t="ラスタ計算機..." w="w-[48px]" h="h-[13px]" arrow={false} icon={<Ic s={13}><path d="M1 1h9v7H1z" fill="#3c6c96" /><rect x="7" y="5" width="11" height="13" fill="#e8e8e8" stroke="#777" /><path d="M9 8h7" stroke="#d33" strokeWidth="2" /><path d="M9 12h7M9 15h7" stroke="#666" strokeDasharray="2 1" /></Ic>} />
      <Sep />
      <MI t="ジオリファレンサー(G)" w="w-[67px]" h="h-[13.500px]" />
      <MI t="データ補間(I)" w="w-[45px]" />
      <MI t="ヒートマップ(H)" w="w-[47px]" />
      <div className="h-px" /><Sep />
      <MI t="地域統計(Z)" w="w-[44px]" h="h-[12.500px]" />
      <MI t="地形解析" w="w-[33px]" h="h-[13px]" icon={<Ic s={13}><rect width="20" height="20" rx="3" fill="#6fa9e0" /><path d="M2 19C1 10 8 4 17 2c3 4 0 10-6 12-3 2-4 5-9 5z" fill="#9ade4b" /><path d="M5 16c0-6 5-9 10-11 2 3-2 6-5 7-2 2-2 4-5 4z" fill="#eb5a42" /></Ic>} />
      <Sep />
      <MI t="投影法" w="w-[25px]" h="h-[13.500px]" />
      <MI t="変換" w="w-[17px]" /><MI t="抽出" w="w-[17px]" /><MI t="解析" w="w-[17px]" h="h-[12.400px]" />
      <MI t="その他" w="w-[22px]" on /><MI t="GdalTools 設定..." w="w-[60px]" arrow={false} h="h-[13px]" />
    </div>
  );
}
function SubMenu() {
  const g = "h-[14.100px]";
  return (
    <div className="absolute top-[146px] left-[411px] flex h-[72px] w-[142px] flex-col border border-[#a0a0a0] bg-[#f7f7f7] shadow-[2px_2px_1px_rgba(0,0,0,0.4)]">
      <MI h={g} arrow={false} t="バーチャルラスタの構築(カタログ)..." w="w-[110px]" icon={<Ic s={12}><path d="M4 9h12l-2 8H2z" fill="#dbe1e6" /><path d="M5 2h4l3 3 6-3-2 8-4 2-6-4z" fill="#2d4d6c" /></Ic>} />
      <MI h={g} arrow={false} t="結合..." w="w-[22px]" icon={<Ic s={12}><path d="M8 2h10l-4 8h-5z" fill="#999" stroke="#666" /><path d="M10 10L7 15" stroke="#555" strokeWidth="2" /><path d="M2 15h14v3H2z" fill="#4c7da8" /></Ic>} />
      <MI h={g} arrow={false} on t="情報..." w="w-[22px]" icon={<Checker s={12} d="#25415f" l="#5d8cba" />} />
      <MI h={g} arrow={false} t="オーバービューの作成(ピラミッド)..." w="w-[109px]" icon={<Ic s={13}><rect x="1" y="1" width="13" height="13" fill="#bfd0de" /><path d="M1 1h5v5H1zM9 6h5v4H9z" fill="#4e7596" /><path d="M10 12l8-2-1 7-6 2z" fill="#335878" /></Ic>} />
      <MI h={g} arrow={false} t="タイルインデックス..." w="w-[61px]" icon={<Ic s={13}><rect x="1" y="1" width="18" height="18" fill="#7ba0bd" /><path d="M7 1v18M13 1v18M1 7h18M1 13h18" stroke="#e9eff4" /></Ic>} />
    </div>
  );
}

function StatusBar() {
  return (
    <div className="flex h-[21px] shrink-0 items-center border-b border-[#d2d2d2] text-[10px] leading-none text-[#111]">
      <Fit className="ml-[4px] w-[117px]">ラスタデータセットに関する情報リスト</Fit>
      <span className={`ml-[169px] h-[14px] w-[15px] shrink-0 ${btn}`}><svg width="12" height="12"><circle cx="4.500" cy="4.500" r="3.200" fill="#999" stroke="#222" /><circle cx="7.500" cy="8" r="3" fill="none" stroke="#222" /><path d="M1 2l10 8M7 4l3-2" stroke="#222" /></svg></span>
      <Fit className="ml-[6px] w-[18px]">座標:</Fit>
      <span className="ml-[6px] flex h-[14px] w-[211px] shrink-0 items-center justify-center rounded-[2px] border border-[#bcbcbc] bg-white"><Fit className="w-[49px]">50623,156783</Fit></span>
      <Fit className="ml-[6px] w-[17px]">縮尺</Fit>
      <span className="ml-[7px] flex h-[14px] w-[58px] shrink-0 items-center justify-between rounded-[2px] border border-[#bcbcbc] bg-white pl-[3px]"><Fit className="w-[27px]">1:23,465</Fit><span className="flex h-full w-[11px] items-center justify-center border-l border-[#ccc] bg-[#f0f0f0]"><Tri className="w-[6px]" /></span></span>
      <Fit className="ml-[6px] w-[18px]">回転:</Fit>
      <span className="ml-[7px] flex h-[17px] w-[69px] shrink-0 items-center justify-between rounded-[2px] border border-[#bcbcbc] bg-white pl-[2px]"><Fit className="w-[10px]">0.0</Fit><span className="flex h-full w-[11px] flex-col items-center justify-around border-l border-[#ccc] bg-[#f0f0f0]"><span className="rotate-180"><Tri className="w-[6px]" /></span><Tri className="w-[6px]" /></span></span>
      <span className="ml-[5px] flex h-[10px] w-[10px] shrink-0 items-center justify-center rounded-[2px] border border-[#ccc] bg-white"><svg width="7" height="7"><path d="M1 1l5 5M6 1L1 6" stroke="#000" strokeWidth="2" /></svg></span>
      <Fit className="ml-[4px] w-[17px]">レンダ</Fit>
      <svg width="12" height="12" className="ml-[13px] shrink-0"><circle cx="6" cy="6" r="4" fill="none" stroke="#444" strokeWidth="2.500" /><path d="M6 0v3M6 9v3M0 6h3M9 6h3" stroke="#555" strokeWidth="2" /></svg>
      <Fit className="ml-[2px] w-[63px]">EPSG:2446 (OTF)</Fit>
    </div>
  );
}

const INFO = [
  ["Lower Right (    53113.021,   152662.170) (134d 4'39.06\"E, 34d22'30.51\"", "ml-[3px] w-[420px]"],
  ["Center        (    50275.662,   154804.715) (134d 2'48.45\"E, 34d23'40.56\"N", "ml-[2px] w-[423px]"],
  ["Band 1 Block=1118x1 Type=Float32, ColorInterp=Gray", "ml-[3px] w-[328px]"],
  ["Min=0.010 Max=215.330", "ml-[12px] w-[141px]"],
  ["Minimum=0.010, Maximum=215.330, Mean=58.115, StdDev=49.148", "ml-[12px] w-[390px]"],
  ["NoData Value=0", "ml-[12px] w-[97px]"],
  ["Metadata:", "ml-[12px] w-[57px]"],
  ["STATISTICS_MAXIMUM=215.33000183105", "ml-[21px] w-[254px]"],
  ["STATISTICS_MEAN=58.115129877676", "ml-[21px] w-[229px]"],
  ["STATISTICS_MINIMUM=0.0099999997764826", "ml-[21px] w-[271px]"],
];
const ROT = { up: "rotate-180", down: "", left: "rotate-90", right: "-rotate-90" };
const SB = ({ d, className }) => (
  <span className={`flex shrink-0 items-center justify-center rounded-[3px] border border-[#a2a2a2] bg-linear-to-b from-[#fbfbfb] to-[#e6e6e6] ${className}`}>
    <svg width="9" height="6" viewBox="0 0 9 6" className={ROT[d]}><path d="M.5 .5h8L4.500 5z" fill="#000" /></svg>
  </span>
);
const track = "bg-[conic-gradient(#ececec_25%,#fafafa_0_50%,#ececec_0_75%,#fafafa_0)] bg-[size:2px_2px]";
const big = "flex items-center justify-center rounded-[4px] border bg-linear-to-b from-[#fcfcfc] to-[#e2e2e2]";

function Dialog() {
  return (
    <div className="absolute top-[123px] left-[855px] flex h-[563px] w-[518px] flex-col rounded-[8px] border border-[#0b1a33] bg-[linear-gradient(180deg,#7ea4dc_0,#9db9e0_100px,#7ba1d9_161px,#0f4ea9_162px,#1450ab_100%)] shadow-[inset_0_0_0_1px_#8fb4e6]">
      <div className="m-px mb-0 flex h-[33px] items-start rounded-t-[6px] bg-[linear-gradient(98deg,#6c95d2_0,#7da1d8_12%,#5585ca_19%,#1150ae_27%,#1150ae_62%,#3f75c2_78%,#7fa4da_92%)]">
        <svg width="16" height="20" viewBox="0 0 18 20" className="mt-[6px] ml-[9px]"><path d="M6 3C1 5 0 13 5 16c3 1 5 0 6-3 1 3 3 4 5 3l1-5c-1-6-5-9-11-8z" fill="#ecf23c" stroke="#8aa233" /><path d="M3 17C4 9 8 4 15 1C14 6 11 10 6 12" fill="#2f9a3a" stroke="#176324" /><path d="M2 15l3 3" stroke="#176324" strokeWidth="2" /></svg>
        <Fit className="mt-[5px] ml-[7px] h-[20px] w-[29px] text-[15px] leading-none text-black [text-shadow:0_0_8px_#fff,0_0_12px_#fff]">情報</Fit>
        <span className="ml-auto flex h-[22px] items-stretch overflow-hidden rounded-b-[5px] border border-t-0 border-[#26406b] shadow-[0_0_0_1px_rgba(255,255,255,0.450)]">
          <span className="flex w-[33px] items-center justify-center border-r border-[#26406b] bg-[linear-gradient(#b5c7e0_0,#9ab3d6_45%,#5478ad_50%,#7fa3d2)] text-[15px] leading-none font-bold text-white [text-shadow:0_0_2px_#223,0_0_2px_#223]">?</span>
          <span className="flex w-[56px] items-center justify-center bg-[linear-gradient(#dd9c92_0,#cf6f61_45%,#b02a18_50%,#cf5a48)]"><svg width="14" height="12" viewBox="0 0 14 12"><path d="M2.500 2l9 8M11.500 2l-9 8" stroke="#4b2a2a" strokeWidth="4.500" /><path d="M2.500 2l9 8M11.500 2l-9 8" stroke="#fff" strokeWidth="3" /></svg></span>
        </span>
        <span className="w-[6px]" />
      </div>
      <div className="mx-[8px] mb-[8px] flex min-h-0 flex-1 flex-col border border-[#27416d] bg-[#efefef] text-[14px] leading-none text-black outline outline-[#9dbce9]">
        <div className="mt-[23px] ml-[23px] flex h-[28px] items-center">
          <Fit className="w-[82px]">入力ファイル(<u>I</u>)</Fit>
          <span className="ml-[7px] flex h-[24px] w-[261px] items-center rounded-[3px] border border-[#b4b4b4] bg-white pl-[4px]"><Fit className="w-[60px]">megijima3</Fit><span className="ml-auto flex h-full w-[19px] items-center justify-center border-l border-[#bbb] bg-[#f1f1f1]"><svg width="9" height="6"><path d="M.5 .5h8L4.500 5z" fill="#000" /></svg></span></span>
          <span className={`ml-[12px] h-[27px] w-[90px] border-[#b4b4b4] ${big}`}><Fit className="w-[37px]">選択...</Fit></span>
        </div>
        <Fit className="mt-[6px] ml-[23px] h-[16px] w-[58px]">ラスタ情報</Fit>
        <div className="mt-[6px] ml-[24px] flex h-[158px] w-[450px] flex-col rounded-[3px] border-2 border-[#4b9df0] bg-white">
          <div className="flex h-[135px]">
            <div className="h-[135px] w-[427px] overflow-hidden">
              {INFO.map(([t, w], i) => <div key={i} className={`flex h-[14.350px] items-center ${i % 2 ? "bg-[#f4f4f4]" : "bg-white"}`}><Fit className={`text-[13.500px] leading-none ${w}`}>{t}</Fit></div>)}
            </div>
            <div className={`flex w-[19px] flex-col ${track}`}>
              <SB d="up" className="h-[19px]" />
              <span className="mt-[44px] h-[31px] rounded-[2px] border border-[#a2a2a2] bg-linear-to-r from-[#fcfcfc] to-[#e4e4e4]" />
              <SB d="up" className="mt-[3px] h-[18px]" /><SB d="down" className="h-[20px]" />
            </div>
          </div>
          <div className={`flex h-[19px] w-[427px] ${track}`}>
            <SB d="left" className="w-[18px]" />
            <span className="flex w-[256px] items-center justify-center rounded-[2px] border border-[#a2a2a2] bg-linear-to-b from-[#fcfcfc] to-[#e4e4e4]"><Dots className="h-[12px] w-[22px] !bg-[size:4px_4px]" /></span>
            <span className="flex-1" />
            <SB d="left" className="w-[19px]" /><SB d="right" className="w-[19px]" />
          </div>
        </div>
        {[["GCP表示を行わない", "mt-[9px]", "w-[117px]"], ["メタデータ表示を行わない", "mt-[8px]", "w-[142px]"]].map(([t, m, w]) => (
          <div key={t} className={`ml-[23px] flex h-[15px] items-center ${m}`}><span className="h-[15px] w-[15px] rounded-[2px] border border-[#c4c4c4] bg-[#f6f6f6]" /><Fit className={`ml-[6px] pb-px ${w}`}>{t}</Fit></div>
        ))}
        <div className="mt-[22px] ml-[13px] flex">
          <div className="h-[158px] w-[434px] rounded-[3px] border border-[#b4b4b4] bg-white pt-[5px] pl-[5px] text-[13.500px]">
            <Fit className="h-[14.500px] w-[351px]">gdalinfo C:¥Users¥yamauchi¥Desktop¥kagawa¥moto¥FG-</Fit>
            <Fit className="h-[14.500px] w-[230px]">GML-5134-40-DEM5AB¥megijima3.tif</Fit>
          </div>
          <div className="ml-[7px] flex flex-col gap-[7px]">
            <span className={`h-[30px] w-[31px] border-[#8e8e8e] ${big}`}><svg width="20" height="20"><path d="M6 16l8-1 5-4-4 5-8 2z" fill="#d5d9e8" /><path d="M6.500 17L7 13L12 2.500L15.500 4L10 14.500Z" fill="#fbb02b" /><path d="M12 2.500L15.500 4L14.500 6L11 4.500Z" fill="#e77a52" /><path d="M6.500 17l.5-3 2 1z" fill="#333" /></svg></span>
            <span className={`h-[30px] w-[31px] border-[#8e8e8e] ${big}`}><svg width="20" height="20"><circle cx="10" cy="10" r="7.800" fill="#d6d6d6" stroke="#b4b4b4" strokeWidth="1.800" /><path d="M13 7.200A4 4 0 1 0 10 14" fill="none" stroke="#f8f8f8" strokeWidth="1.800" /><path d="M9 10l5-1v5z" fill="#f8f8f8" /></svg></span>
          </div>
        </div>
        <div className="mt-[13px] mr-[13px] flex justify-end gap-[13px]">
          <span className={`h-[27px] w-[89px] border-[#777] ${big}`}><Fit className="w-[18px]">OK</Fit></span>
          <span className={`h-[27px] w-[89px] border-[#b4b4b4] ${big}`}><Fit className="w-[36px]">閉じる</Fit></span>
          <span className={`h-[27px] w-[89px] border-[#b4b4b4] ${big}`}><Fit className="w-[34px]">ヘルプ</Fit></span>
        </div>
      </div>
    </div>
  );
}

export default function App() {
  return (
    <div className="relative h-[686px] w-[1373px] overflow-hidden bg-white font-['Liberation_Sans','Noto_Sans_CJK_JP',sans-serif]">
      <div className="flex h-[675px] w-[900px] flex-col overflow-hidden bg-[#efefef]">
        <div className="flex h-[14px] shrink-0 items-center border-b border-[#d0d0d0] pb-px text-[9.500px] leading-none text-[#111]">
          {MENUS.map(([t, w]) => t === "ラスタ(R)"
            ? <span key={t} className="ml-[6px] flex h-[13px] w-[38px] shrink-0 items-center justify-center border border-[#999] bg-[#d6d6d6]"><Fit className={w}>{t}</Fit></span>
            : <Fit key={t} className={w}>{t}</Fit>)}
        </div>
        <Toolbar1 />
        <Toolbar2 />
        <Toolbar3 />
        <div className="flex h-[558px] shrink-0">
          <LeftPanel />
          <div className="min-w-0 flex-1 border-2 border-[#62aaf2] bg-white pt-[32px] pl-[190px]"><Island /></div>
        </div>
        <StatusBar />
      </div>
      <RasterMenu />
      <SubMenu />
      <Dialog />
      <div className="absolute top-[291.500px] left-[898px] h-[26px] w-[411px] border-[5px] border-[#f00]" />
      <svg width="380" height="130" className="pointer-events-none absolute top-[175px] left-[525px]"><path d="M7 8L360 114" stroke="#f00" strokeWidth="5.500" /><path d="M374 117.500L355 122L361 105.500Z" fill="#f00" /></svg>
    </div>
  );
}
